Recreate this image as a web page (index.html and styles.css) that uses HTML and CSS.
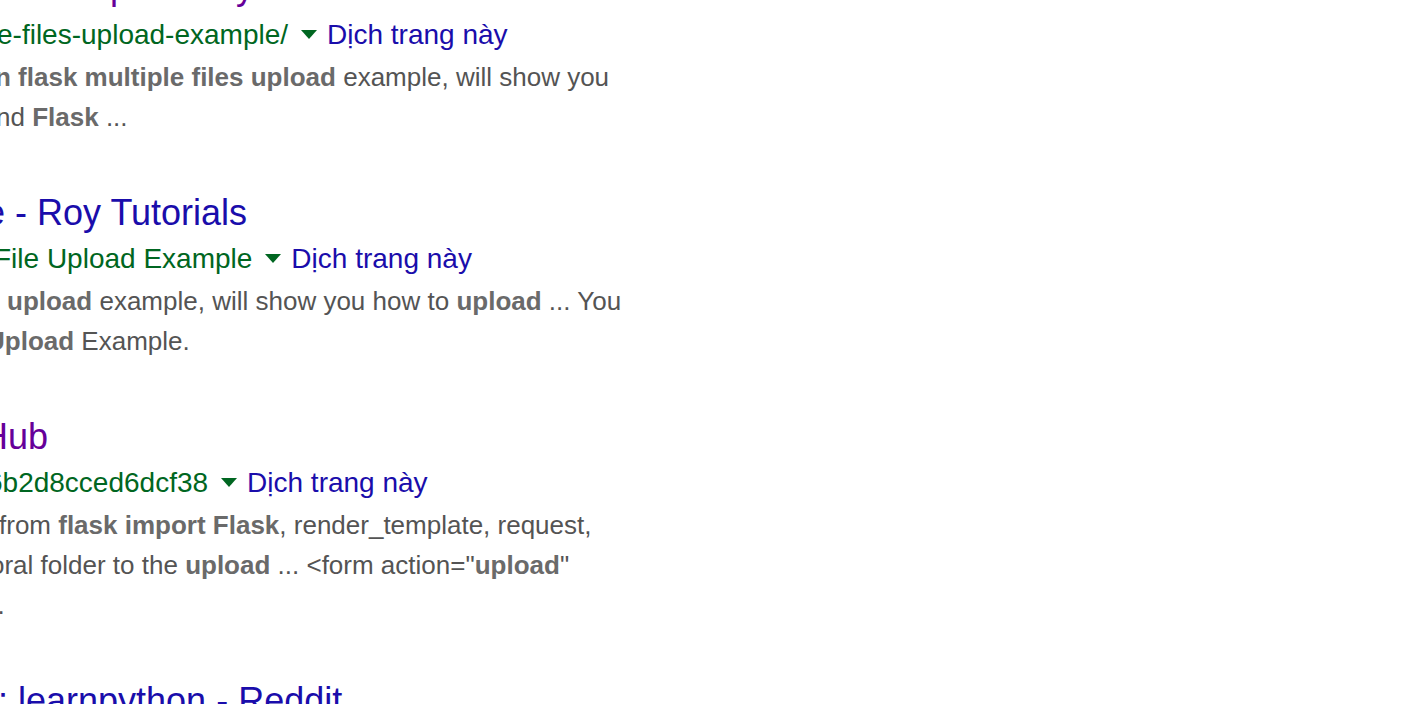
FILE: index.html
```html
<!DOCTYPE html>
<html lang="vi">
<head>
<meta charset="utf-8">
<title>Kết quả tìm kiếm</title>
<link rel="stylesheet" href="styles.css">
</head>
<body>
<main class="results">
  <div class="result">
    <h3 class="title visited cut-t1">Example - Roy Tutorials</h3>
    <div class="cite-line cut-c1"><cite class="cite">e-files-upload-example/</cite><span class="arrow"></span><a class="translate" href="#">Dịch trang này</a></div>
    <div class="snippet">
      <div class="line cut-s11"><em>n flask multiple files upload</em> example, will show you</div>
      <div class="line cut-s12">nd <em>Flask</em> ...</div>
    </div>
  </div>

  <div class="result">
    <h3 class="title cut-t2">e - Roy Tutorials</h3>
    <div class="cite-line cut-c2"><cite class="cite">File Upload Example</cite><span class="arrow"></span><a class="translate" href="#">Dịch trang này</a></div>
    <div class="snippet">
      <div class="line cut-s21"><em>upload</em> example, will show you how to <em>upload</em> ... You</div>
      <div class="line cut-s22"><em>Upload</em> Example.</div>
    </div>
  </div>

  <div class="result">
    <h3 class="title visited cut-t3">Hub</h3>
    <div class="cite-line cut-c3"><cite class="cite">6b2d8cced6dcf38</cite><span class="arrow"></span><a class="translate" href="#">Dịch trang này</a></div>
    <div class="snippet">
      <div class="line cut-s31">from <em>flask import Flask</em>, render_template, request,</div>
      <div class="line cut-s32">oral folder to the <em>upload</em> ... &lt;form action="<em>upload</em>"</div>
      <div class="line cut-s33">...</div>
    </div>
  </div>

  <div class="result">
    <h3 class="title cut-t4">: learnpython - Reddit</h3>
  </div>
</main>
</body>
</html>
```

FILE: styles.css
```css
html, body {
  margin: 0;
  padding: 0;
  background: #ffffff;
  overflow: hidden;
}

body {
  font-family: "Liberation Sans", Arial, sans-serif;
  width: 1412px;
  height: 704px;
}

.results {
  display: flex;
  flex-direction: column;
  margin-top: -34px;
}

.result {
  display: flex;
  flex-direction: column;
  margin-bottom: 53px;
}

.title {
  margin: 0;
  font-size: 36px;
  font-weight: normal;
  line-height: 45px;
  color: #1a0dab;
  white-space: nowrap;
}

.title.visited {
  color: #660099;
}

.cite-line {
  margin-top: 6px;
  font-size: 28px;
  line-height: 36px;
  white-space: nowrap;
}

.cite {
  font-style: normal;
  color: #006621;
}

.arrow {
  display: inline-block;
  width: 0;
  height: 0;
  border-style: solid;
  border-color: #006621 transparent transparent transparent;
  border-width: 9px 8px 0 8px;
  margin-left: 13px;
  vertical-align: 5px;
}

.translate {
  margin-left: 10px;
  color: #1a0dab;
  text-decoration: none;
}

.snippet {
  margin-top: 4px;
  font-size: 26px;
  line-height: 40px;
  color: #545454;
}

.snippet .line {
  white-space: nowrap;
}

.snippet em {
  font-style: normal;
  font-weight: bold;
  color: #6a6a6a;
}

/* horizontal offsets of each cropped line */
.cut-t1 { text-indent: 18px; margin-top: -2px; margin-bottom: 2px; }
.cut-c1 { text-indent: -3px; }
.cut-s11 { text-indent: -5px; }
.cut-s12 { text-indent: -4px; }
.cut-t2 { text-indent: -15px; }
.cut-c2 { text-indent: -6px; }
.cut-s21 { text-indent: 7px; }
.cut-s22 { text-indent: -14px; }
.cut-t3 { text-indent: -18px; }
.cut-c3 { text-indent: -13px; }
.cut-s31 { text-indent: -1px; }
.cut-s32 { text-indent: -10px; }
.cut-s33 { text-indent: -17px; }
.cut-t4 { text-indent: -2px; }
```
